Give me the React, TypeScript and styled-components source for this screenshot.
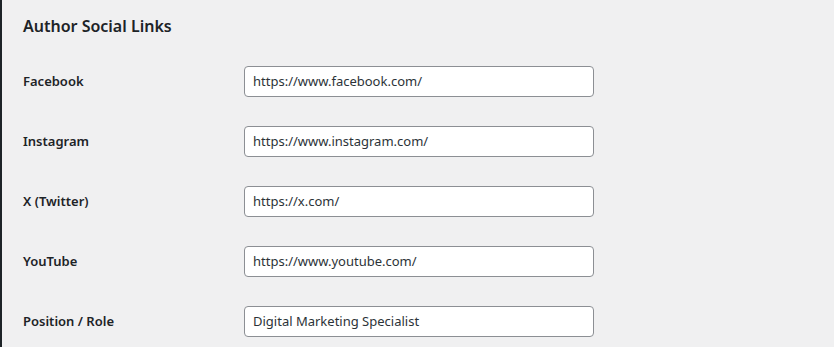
import { createGlobalStyle, styled } from 'styled-components'

const GlobalStyle = createGlobalStyle`
  html, body {
    margin: 0;
    padding: 0;
    background: #f0f0f1;
  }
  body {
    font-family: 'Noto Sans', 'Open Sans', sans-serif;
    color: #1d2327;
  }
`

const fields = [
  { label: 'Facebook', value: 'https://www.facebook.com/' },
  { label: 'Instagram', value: 'https://www.instagram.com/' },
  { label: 'X (Twitter)', value: 'https://x.com/' },
  { label: 'YouTube', value: 'https://www.youtube.com/' },
  { label: 'Position / Role', value: 'Digital Marketing Specialist' },
]

export default function App() {
  return (
    <>
      <GlobalStyle />
      <Page>
        <Content>
          <Heading>Author Social Links</Heading>
          <FormTable>
            {fields.map(f => (
              <Row key={f.label}>
                <Label>{f.label}</Label>
                <Input type="text" defaultValue={f.value} readOnly />
              </Row>
            ))}
          </FormTable>
        </Content>
      </Page>
    </>
  )
}

const Page = styled.div`
  display: flex;
  height: 347px;
  overflow: hidden;
  border-left: 2px solid #1d2327;
`

const Content = styled.div`
  flex: 1;
  padding-left: 21px;
`

const Heading = styled.h2`
  margin: 0;
  padding-top: 15px;
  height: 36px;
  font-size: 16px;
  font-weight: 600;
  line-height: 22px;
`

const FormTable = styled.div`
  display: flex;
  flex-direction: column;
`

const Row = styled.div`
  display: flex;
  align-items: center;
  height: 60px;
`

const Label = styled.label`
  width: 221px;
  flex-shrink: 0;
  font-size: 13px;
  font-weight: 600;
`

const Input = styled.input`
  box-sizing: border-box;
  width: 350px;
  height: 31px;
  padding: 0 8px;
  border: 1px solid #8c8f94;
  border-radius: 4px;
  background: #fff;
  font-family: inherit;
  font-size: 13px;
  color: #2c3338;
  outline: none;
`
